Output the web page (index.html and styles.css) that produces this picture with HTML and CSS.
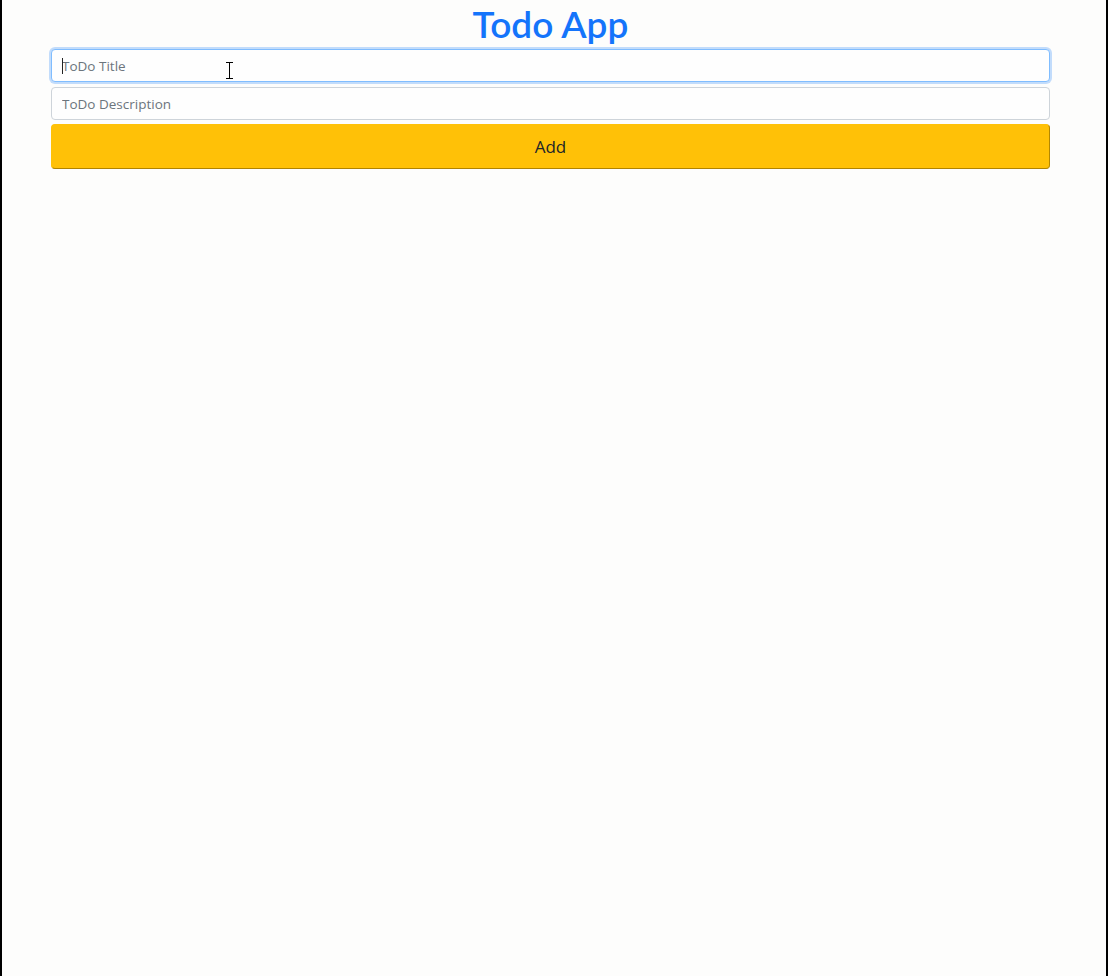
FILE: index.html
```html
<!DOCTYPE html>
<html lang="en">
<head>
<meta charset="utf-8">
<title>Todo App</title>
<link rel="stylesheet" href="styles.css">
</head>
<body>
<div class="frame">
  <main class="container">
    <h1 class="title">Todo App</h1>
    <form class="todo-form">
      <div class="field">
        <input class="input input-focus" type="text" placeholder="ToDo Title">
        <span class="caret"></span>
        <svg class="ibeam" width="9" height="17" viewBox="0 0 9 17"><path d="M1 0.5H8M4.5 0.5V16.5M1 16.5H8" stroke="#000" stroke-width="1" fill="none"/></svg>
      </div>
      <input class="input" type="text" placeholder="ToDo Description">
      <button class="btn-add" type="button">Add</button>
    </form>
  </main>
</div>
</body>
</html>
```
FILE: styles.css
```css
html, body {
  margin: 0;
  padding: 0;
  background: #fdfdfc;
}
.frame {
  box-sizing: border-box;
  width: 1108px;
  height: 976px;
  border-left: 2px solid #000;
  border-right: 2px solid #000;
  background: #fdfdfc;
  font-family: "Open Sans", "Noto Sans", sans-serif;
}
.container {
  width: 999px;
  margin-left: 49px;
}
.title {
  margin: 0;
  height: 47px;
  text-align: center;
  font-family: "Lato", "Open Sans", sans-serif;
  font-weight: 600;
  font-size: 37px;
  line-height: 47px;
  color: #1474fb;
  letter-spacing: 0;
}
.todo-form {
  display: flex;
  flex-direction: column;
  padding-top: 2px;
}
.field {
  position: relative;
}
.input {
  box-sizing: border-box;
  display: block;
  width: 100%;
  height: 33px;
  margin: 0 0 5px 0;
  padding: 0 10px;
  border: 1px solid #ced4da;
  border-radius: 4px;
  background: #fefefe;
  font-family: "Open Sans", "Noto Sans", sans-serif;
  font-size: 13.5px;
  color: #495057;
  outline: none;
}
.input + .btn-add { margin-top: -1px; }
.input::placeholder {
  color: #6c757d;
}
.input-focus {
  border-color: #80bdff;
  box-shadow: 0 0 0 2px #c2dcfb;
}
.caret {
  position: absolute;
  left: 11px;
  top: 9px;
  width: 1px;
  height: 16px;
  background: #222;
}
.ibeam {
  position: absolute;
  left: 174px;
  top: 13px;
}
.btn-add {
  box-sizing: border-box;
  display: block;
  width: 100%;
  height: 45px;
  padding: 0;
  border: 1px solid #ffc107;
  border-right-color: #b38700;
  border-bottom-color: #b08400;
  border-radius: 4px;
  background: #ffc107;
  color: #212529;
  font-family: "Open Sans", "Noto Sans", sans-serif;
  font-size: 17px;
  cursor: pointer;
}
```
